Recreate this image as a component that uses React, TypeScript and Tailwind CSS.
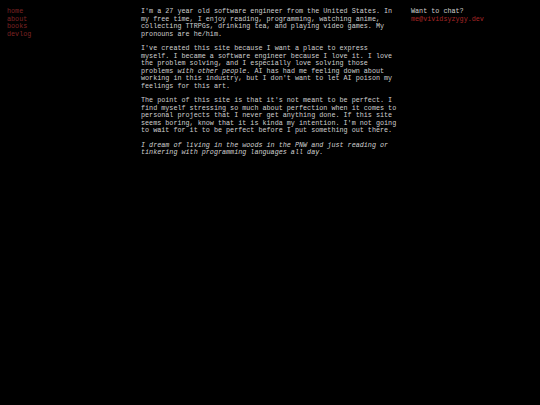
export default function App() {
	const links = ["home", "about", "books", "devlog"];

	return (
		<div
			className="min-h-[405px] w-[540px] bg-black text-[#cfcfcf] text-[6.75px] leading-[7.55px]"
			style={{ fontFamily: '"Liberation Mono", "Courier New", monospace' }}
		>
			<div className="flex pt-[8px] pl-[7px]">
				{/* Nav */}
				<nav className="w-[134px] flex flex-col">
					{links.map((link) => (
						<a key={link} href="#" className="text-[#7e2424]">
							{link}
						</a>
					))}
				</nav>

				{/* Main */}
				<main className="w-[258px] flex flex-col gap-[6.9px]">
					<p>
						I'm a 27 year old software engineer from the United States. In my free
						time, I enjoy reading, programming, watching anime, collecting TTRPGs,
						drinking tea, and playing video games. My pronouns are he/him.
					</p>
					<p>
						I've created this site because I want a place to express myself. I
						became a software engineer because I love it. I love the problem
						solving, and I especially love solving those problems <em>with other people</em>.
						AI has had me feeling down about working in this industry, but I don't
						want to let AI poison my feelings for this art.
					</p>
					<p>
						The point of this site is that it's not meant to be perfect. I find
						myself stressing so much about perfection when it comes to personal
						projects that I never get anything done. If this site seems boring, know
						that it is kinda my intention. I'm not going to wait for it to be
						perfect before I put something out there.
					</p>
					<p className="italic">
						I dream of living in the woods in the PNW and just reading or tinkering
						with programming languages all day.
					</p>
				</main>

				{/* Contact */}
				<aside className="ml-[12px] flex flex-col">
					<span>Want to chat?</span>
					<a href="#" className="text-[#a82626]">
						me@vividsyzygy.dev
					</a>
				</aside>
			</div>
		</div>
	);
}
